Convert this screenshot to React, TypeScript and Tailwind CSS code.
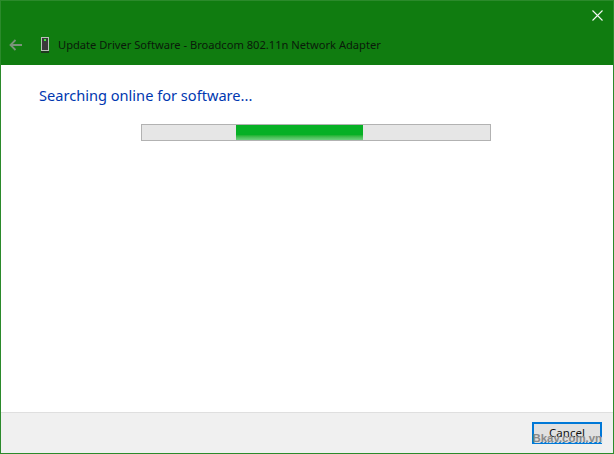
export default function App() {
  return (
    <div className="w-[614px] h-[454px] flex flex-col border border-[#2b8a2b] bg-white overflow-hidden font-['Noto_Sans',sans-serif]">
      <header className="h-[64px] shrink-0 bg-[#107c10] flex flex-col">
        <div className="h-[29px] flex justify-end items-start pt-[9px] pr-[10px]">
          <svg width="11" height="11" viewBox="0 0 11 11" fill="none" stroke="#f4f8f4" strokeWidth="1.1">
            <path d="M0.5 0.5 L10.5 10.5 M10.5 0.5 L0.5 10.5" />
          </svg>
        </div>
        <div className="flex items-center h-[30px]">
          <svg className="ml-[8px]" width="13" height="12" viewBox="0 0 13 12" fill="none" stroke="#7a937a" strokeWidth="1.8">
            <path d="M13 6 H2 M6.5 1 L1.5 6 L6.5 11" />
          </svg>
          <svg className="ml-[18px]" width="10" height="16" viewBox="0 0 10 16">
            <rect x="1.5" y="0.5" width="7" height="13" fill="#3a3a3a" stroke="#b9c4b9" />
            <rect x="4" y="2" width="2" height="2" fill="#3cf03c" />
            <rect x="1" y="14" width="8" height="2" fill="#1f3a1f" />
          </svg>
          <span className="ml-[8px] text-[11.14px] leading-[16px] text-[#0a1a0a] whitespace-nowrap">
            Update Driver Software - Broadcom 802.11n Network Adapter
          </span>
        </div>
      </header>
      <main className="flex-1 flex flex-col">
        <h1 className="ml-[38px] mt-[19px] text-[14.6px] leading-[22px] font-normal text-[#0037b0] whitespace-nowrap">
          Searching online for software...
        </h1>
        <div className="ml-[140px] mt-[18px] w-[350px] h-[17px] border border-[#b2b2b2] bg-[#e6e6e6] flex">
          <div className="ml-[94px] w-[127px] h-full bg-gradient-to-b from-[#06b025] from-65% to-[#6fd080]" />
        </div>
      </main>
      <footer className="relative h-[41px] shrink-0 bg-[#f0f0f0] border-t border-[#dfdfdf] flex justify-end items-start pt-[9px] pr-[11px]">
        <button className="w-[70px] h-[22px] border-2 border-[#0078d7] bg-[#e1e1e1] text-[11.5px] leading-[16px] text-[#111] text-center">
          Cancel
        </button>
        <span className="absolute right-[11px] top-[18px] text-[11.4px] leading-[14px] font-bold text-[#8a8a8a] whitespace-nowrap font-['Liberation_Sans',sans-serif] [text-shadow:1px_1px_0_#dddddd]">
          Bkav.com.vn
        </span>
      </footer>
    </div>
  );
}
